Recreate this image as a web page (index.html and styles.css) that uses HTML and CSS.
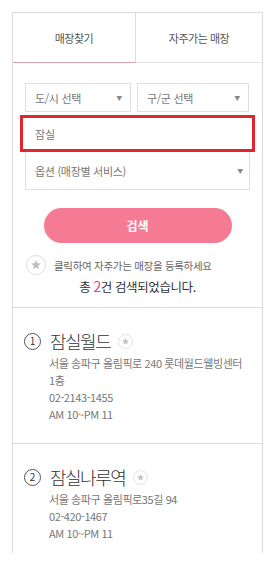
FILE: index.html
```html
<!DOCTYPE html>
<html lang="ko">
<head>
<meta charset="utf-8">
<link rel="stylesheet" href="styles.css">
</head>
<body>
<div class="panel">
  <div class="tabs">
    <div class="tab active">매장찾기</div>
    <div class="tab">자주가는 매장</div>
  </div>
  <div class="form">
    <div class="row">
      <div class="select"><span>도/시 선택</span><span class="arrow">▼</span></div>
      <div class="select"><span>구/군 선택</span><span class="arrow">▼</span></div>
    </div>
    <div class="keyword">잠실</div>
    <div class="select option"><span>옵션 (매장별 서비스)</span><span class="arrow">▼</span></div>
    <div class="btn-wrap"><div class="btn">검색</div></div>
    <div class="hint">
      <span class="star-circle"><svg viewBox="0 0 24 24" width="12" height="12"><path d="M12 2.5l2.8 6 6.6.7-4.9 4.5 1.4 6.5L12 16.9l-5.9 3.3 1.4-6.5-4.9-4.5 6.6-.7z" fill="#bdbdbd"/></svg></span>
      <span>클릭하여 자주가는 매장을 등록하세요</span>
    </div>
    <div class="count">총 <b>2</b>건 검색되었습니다.</div>
  </div>
  <ul class="list">
    <li class="item">
      <div class="title"><span class="num">1</span><span class="name">잠실월드</span><span class="fav"><svg viewBox="0 0 24 24" width="9" height="9"><path d="M12 2.5l2.8 6 6.6.7-4.9 4.5 1.4 6.5L12 16.9l-5.9 3.3 1.4-6.5-4.9-4.5 6.6-.7z" fill="#c4c4c4"/></svg></span></div>
      <div class="info">
        <p>서울 송파구 올림픽로 240 롯데월드웰빙센터 1층</p>
        <p>02-2143-1455</p>
        <p>AM 10~PM 11</p>
      </div>
    </li>
    <li class="item">
      <div class="title"><span class="num">2</span><span class="name">잠실나루역</span><span class="fav"><svg viewBox="0 0 24 24" width="9" height="9"><path d="M12 2.5l2.8 6 6.6.7-4.9 4.5 1.4 6.5L12 16.9l-5.9 3.3 1.4-6.5-4.9-4.5 6.6-.7z" fill="#c4c4c4"/></svg></span></div>
      <div class="info">
        <p>서울 송파구 올림픽로35길 94</p>
        <p>02-420-1467</p>
        <p>AM 10~PM 11</p>
      </div>
    </li>
  </ul>
</div>
</body>
</html>
```
FILE: styles.css
```css
* { box-sizing: border-box; }
body {
  margin: 0;
  background: #fff;
  font-family: "Noto Sans CJK KR", "Noto Sans", sans-serif;
  color: #555;
}
.panel {
  margin: 12px 0 0 12px;
  width: 251px;
  height: 541px;
  border: 1px solid #dcdcdc;
  border-bottom: none;
}
.tabs {
  display: grid;
  grid-template-columns: 123px 1fr;
  height: 50px;
}
.tab {
  display: flex;
  align-items: center;
  justify-content: center;
  font-size: 11px;
  letter-spacing: -0.5px;
  color: #555;
  border-bottom: 1px solid #e2e2e2;
}
.tab.active {
  border-right: 1px solid #dcdcdc;
  border-bottom-color: #d8a4a8;
}
.form {
  padding: 20px 12px 0 12px;
}
.row {
  display: grid;
  grid-template-columns: 106px 112px;
  gap: 6px;
}
.select {
  height: 29px;
  border: 1px solid #e0e0e0;
  display: flex;
  align-items: center;
  justify-content: space-between;
  padding: 0 8px 0 9px;
  font-size: 11px;
  letter-spacing: -0.3px;
  color: #777;
}
.arrow {
  font-size: 6px;
  color: #888;
}
.keyword {
  margin: 3px -5px 0 -5px;
  height: 37px;
  border: 3px solid #e1262d;
  display: flex;
  align-items: center;
  padding-left: 12px;
  font-size: 11px;
  color: #777;
}
.select.option {
  height: 38px;
  border-top: none;
  padding-right: 6px;
}
.btn-wrap {
  display: flex;
  justify-content: center;
  margin-top: 18px;
}
.btn {
  width: 188px;
  height: 35px;
  border-radius: 18px;
  background: #f47b93;
  color: #fff;
  font-size: 12px;
  font-weight: bold;
  display: flex;
  align-items: center;
  justify-content: center;
}
.hint {
  display: flex;
  align-items: center;
  gap: 8px;
  margin-top: 12px;
  font-size: 10.5px;
  letter-spacing: -0.3px;
  color: #666;
}
.star-circle {
  width: 20px;
  height: 20px;
  border-radius: 50%;
  border: 1px solid #dedede;
  display: flex;
  align-items: center;
  justify-content: center;
  margin-left: 1px;
}
.count {
  text-align: center;
  margin-top: 2px;
  font-size: 12.5px;
  letter-spacing: -0.4px;
  color: #333;
  line-height: 18px;
}
.count b {
  color: #e2408a;
  font-weight: normal;
  font-size: 14px;
}
.list {
  list-style: none;
  margin: 11px 0 0 0;
  padding: 0;
}
.item {
  border-top: 1px solid #dcdcdc;
  padding: 21px 12px 20px 11px;
}
.title {
  display: flex;
  align-items: center;
  height: 24px;
}
.num {
  width: 17px;
  height: 17px;
  border: 1px solid #555;
  border-radius: 50%;
  display: flex;
  align-items: center;
  justify-content: center;
  font-size: 10px;
  color: #333;
  line-height: 1;
}
.name {
  margin-left: 9px;
  font-size: 18px;
  font-weight: 300;
  letter-spacing: -1.5px;
  color: #333;
}
.fav {
  margin-left: 8px;
  width: 15px;
  height: 15px;
  border-radius: 50%;
  border: 1px solid #e2e2e2;
  display: flex;
  align-items: center;
  justify-content: center;
}
.info {
  margin: 2px 0 0 25px;
  font-size: 11px;
  letter-spacing: -0.4px;
  color: #777;
  line-height: 17px;
}
.info p {
  margin: 0;
}
```
